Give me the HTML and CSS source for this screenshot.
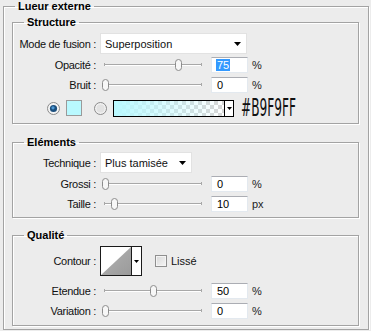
FILE: index.html
```html
<!DOCTYPE html>
<html lang="fr">
<head>
    <meta charset="UTF-8">
    <title>Lueur externe</title>
    <link rel="stylesheet" href="styles.css">
</head>
<body>

<fieldset class="group outer">
    <legend>Lueur externe</legend>

    <fieldset class="group structure">
        <legend>Structure</legend>

        <div class="row row-select">
            <span class="label">Mode de fusion :</span>
            <div class="select select-wide">
                <span>Superposition</span>
                <svg class="caret" width="7" height="4" viewBox="0 0 7 4"><path d="M0 0H7L3.5 4Z"/></svg>
            </div>
        </div>

        <div class="row">
            <span class="label">Opacité :</span>
            <div class="slider">
                <span class="track"></span>
                <svg class="thumb" style="left:74px" width="9" height="12" viewBox="0 0 9 12"><rect x="1.5" y="0.5" width="6" height="11" rx="3" /></svg>
            </div>
            <div class="field"><span class="selected">75</span></div>
            <span class="unit">%</span>
        </div>

        <div class="row">
            <span class="label">Bruit :</span>
            <div class="slider">
                <span class="track"></span>
                <svg class="thumb" style="left:1px" width="9" height="12" viewBox="0 0 9 12"><rect x="1.5" y="0.5" width="6" height="11" rx="3" /></svg>
            </div>
            <div class="field">0</div>
            <span class="unit">%</span>
        </div>

        <div class="row row-color">
            <svg class="radio" width="13" height="13" viewBox="0 0 13 13">
                <circle cx="6.5" cy="6.5" r="6" fill="#f4f4f4" stroke="#8a8a8a"/>
                <circle cx="6.5" cy="6.5" r="3.6" fill="#1b4f7e"/>
                <circle cx="6" cy="5.8" r="1.6" fill="#4f9ad6"/>
            </svg>
            <span class="swatch"></span>
            <svg class="radio radio-off" width="13" height="13" viewBox="0 0 13 13">
                <circle cx="6.5" cy="6.5" r="6" fill="#f0f0f0" stroke="#8a8a8a"/>
                <circle cx="6.5" cy="6.5" r="4" fill="#e2e2e2"/>
            </svg>
            <div class="gradient">
                <span class="gradient-fill"></span>
                <span class="gradient-arrow">
                    <svg width="5" height="3" viewBox="0 0 5 3"><path d="M0 0H5L2.5 3Z"/></svg>
                </span>
            </div>
            <span class="hex">#B9F9FF</span>
        </div>
    </fieldset>

    <fieldset class="group elements">
        <legend>Eléments</legend>

        <div class="row row-select">
            <span class="label">Technique :</span>
            <div class="select select-small">
                <span>Plus tamisée</span>
                <svg class="caret" width="7" height="4" viewBox="0 0 7 4"><path d="M0 0H7L3.5 4Z"/></svg>
            </div>
        </div>

        <div class="row">
            <span class="label">Grossi :</span>
            <div class="slider">
                <span class="track"></span>
                <svg class="thumb" style="left:1px" width="9" height="12" viewBox="0 0 9 12"><rect x="1.5" y="0.5" width="6" height="11" rx="3" /></svg>
            </div>
            <div class="field">0</div>
            <span class="unit">%</span>
        </div>

        <div class="row">
            <span class="label">Taille :</span>
            <div class="slider">
                <span class="track"></span>
                <svg class="thumb" style="left:10px" width="9" height="12" viewBox="0 0 9 12"><rect x="1.5" y="0.5" width="6" height="11" rx="3" /></svg>
            </div>
            <div class="field">10</div>
            <span class="unit">px</span>
        </div>
    </fieldset>

    <fieldset class="group quality">
        <legend>Qualité</legend>

        <div class="row row-contour">
            <span class="label">Contour :</span>
            <div class="contour">
                <svg class="contour-curve" width="30" height="28" viewBox="0 0 30 28">
                    <defs>
                        <linearGradient id="curveFill" x1="0" y1="0" x2="1" y2="1">
                            <stop offset="0" stop-color="#b4b4b4"/>
                            <stop offset="1" stop-color="#9a9a9a"/>
                        </linearGradient>
                    </defs>
                    <rect width="30" height="28" fill="#fff"/>
                    <path d="M0 28L30 0V28Z" fill="url(#curveFill)"/>
                </svg>
                <span class="contour-arrow">
                    <svg width="5" height="3" viewBox="0 0 5 3"><path d="M0 0H5L2.5 3Z"/></svg>
                </span>
            </div>
            <span class="checkbox"></span>
            <span class="check-label">Lissé</span>
        </div>

        <div class="row row-spaced">
            <span class="label">Etendue :</span>
            <div class="slider">
                <span class="track"></span>
                <svg class="thumb" style="left:49px" width="9" height="12" viewBox="0 0 9 12"><rect x="1.5" y="0.5" width="6" height="11" rx="3" /></svg>
            </div>
            <div class="field">50</div>
            <span class="unit">%</span>
        </div>

        <div class="row">
            <span class="label">Variation :</span>
            <div class="slider">
                <span class="track"></span>
                <svg class="thumb" style="left:1px" width="9" height="12" viewBox="0 0 9 12"><rect x="1.5" y="0.5" width="6" height="11" rx="3" /></svg>
            </div>
            <div class="field">0</div>
            <span class="unit">%</span>
        </div>
    </fieldset>
</fieldset>

</body>
</html>
```

FILE: styles.css
```css
body {
    margin: 0;
    background-color: #ececec;
    font-family: 'Liberation Sans', Arial, sans-serif;
    font-size: 11px;
    color: #111;
}

.group {
    margin: 0;
    padding: 0;
    min-inline-size: 0;
    border: 1px solid #a3a3a3;
    box-shadow: 1px 1px 0 #fff, inset 1px 1px 0 #fff;
}

.group legend {
    margin-left: 11px;
    padding: 0 3px;
    font-weight: bold;
    line-height: 13px;
    color: #000;
}

.outer {
    margin: 0 2px 0 3px;
    padding-bottom: 3px;
}

.structure,
.elements,
.quality {
    margin-left: 8px;
    margin-right: 9px;
}

.structure {
    margin-top: 3px;
    padding: 4px 0 6px;
}

.elements {
    margin-top: 12px;
    padding: 3px 0 5px;
}

.quality {
    margin-top: 11px;
    padding: 4px 0 6px;
}

/* rows */
.row {
    display: flex;
    align-items: center;
    height: 16px;
    margin-top: 4px;
}

.row-select {
    height: 21px;
    margin-top: 0;
}

.row-select + .row {
    margin-top: 3px;
}

.label {
    width: 83px;
    margin-right: 4px;
    text-align: right;
    white-space: nowrap;
    letter-spacing: -0.3px;
}

/* dropdowns */
.select {
    display: flex;
    align-items: center;
    justify-content: space-between;
    box-sizing: border-box;
    height: 21px;
    padding: 0 5px 0 4px;
    background-color: #fff;
    border: 1px solid #e2e2e2;
}

.select-wide {
    width: 147px;
}

.select-small {
    width: 92px;
}

.caret {
    fill: #000;
    margin-top: 1px;
}

/* sliders */
.slider {
    position: relative;
    width: 111px;
    height: 16px;
}

.track {
    position: absolute;
    left: 4px;
    right: 9px;
    top: 7px;
    height: 1px;
    background-color: #a8a8a8;
    border-bottom: 1px solid #fff;
}

.track::before,
.track::after {
    content: "";
    position: absolute;
    top: -1px;
    width: 1px;
    height: 3px;
    background-color: #a8a8a8;
}

.track::before {
    left: 0;
}

.track::after {
    right: 0;
}

.thumb {
    position: absolute;
    top: 2px;
    fill: #f7f7f7;
    stroke: #8c8c8c;
}

/* number fields */
.field {
    box-sizing: border-box;
    width: 37px;
    height: 16px;
    padding-left: 5px;
    line-height: 14px;
    background-color: #fff;
    border: 1px solid #e3e9ef;
    border-top-color: #abadb3;
    color: #000;
}

.selected {
    display: inline-block;
    line-height: 12px;
    margin-top: 1px;
    padding: 0 1px;
    margin-left: -1px;
    background-color: #3399ff;
    color: #fff;
}

.unit {
    margin-left: 4px;
    color: #222;
}

/* colour row */
.row-color {
    height: 18px;
    margin-top: 6px;
}

.radio {
    margin-left: 34px;
}

.radio-off {
    margin-left: 12px;
}

.swatch {
    box-sizing: border-box;
    width: 16px;
    height: 16px;
    margin-left: 6px;
    background-color: #b9f9ff;
    border: 1px solid #9a9a9a;
}

.gradient {
    display: flex;
    box-sizing: border-box;
    width: 121px;
    height: 17px;
    margin-left: 6px;
    border: 1px solid #000;
    background-color: #fff;
    background-image:
        linear-gradient(45deg, #d6d6d6 25%, transparent 25%, transparent 75%, #d6d6d6 75%),
        linear-gradient(45deg, #d6d6d6 25%, transparent 25%, transparent 75%, #d6d6d6 75%);
    background-size: 8px 8px;
    background-position: 0 0, 4px 4px;
}

.gradient-fill {
    flex: 1;
    background: linear-gradient(to right, #b9f9ff, rgba(185, 249, 255, 0));
}

.gradient-arrow {
    display: flex;
    align-items: center;
    justify-content: center;
    width: 8px;
    background-color: #fff;
    border-left: 1px solid #000;
    fill: #000;
}

.hex {
    margin-left: 7px;
    font-family: 'DejaVu Sans Condensed', 'DejaVu Sans', sans-serif;
    font-size: 25px;
    line-height: 18px;
    color: #111;
    transform: scaleX(0.54);
    transform-origin: left center;
    white-space: nowrap;
}

/* contour row */
.row-contour {
    height: 30px;
    margin-top: 0;
}

.contour {
    display: flex;
    box-sizing: border-box;
    width: 42px;
    height: 30px;
    border: 1px solid #1a1a1a;
    background-color: #fff;
}

.contour-curve {
    display: block;
}

.contour-arrow {
    display: flex;
    align-items: center;
    justify-content: center;
    flex: 1;
    border-left: 1px solid #1a1a1a;
    fill: #000;
}

.checkbox {
    box-sizing: border-box;
    width: 12px;
    height: 12px;
    margin-left: 13px;
    border: 1px solid #8f8f8f;
    background: linear-gradient(135deg, #d8d8d8, #f6f6f6);
    box-shadow: inset 0 0 0 1px #f4f4f4;
}

.check-label {
    margin-left: 4px;
}

.row-spaced {
    margin-top: 7px;
}
```
